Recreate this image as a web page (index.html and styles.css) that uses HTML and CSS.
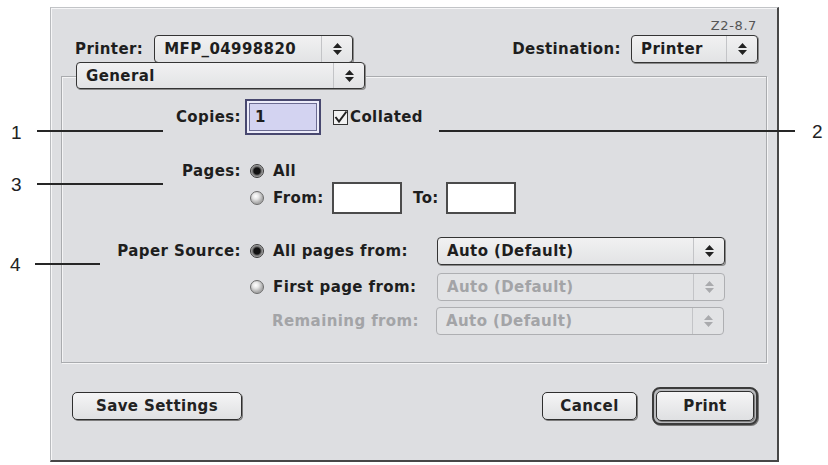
FILE: index.html
```html
<!DOCTYPE html>
<html>

<head>
  <meta charset="utf-8">
  <meta name="viewport" content="width=device-width">
  <title>Print dialog</title>
  <link rel="stylesheet" href="styles.css">
</head>

<body>
  <div class="dialog">
    <div class="version">Z2-8.7</div>

    <div class="top-row">
      <div class="field">
        <span class="lbl">Printer:</span>
        <div class="popup printer-pop">
          <span class="value">MFP_04998820</span>
          <span class="arrows"><svg width="9" height="12" viewBox="0 0 9 12"><path d="M4.5 0L9 5H0Z M0 7H9L4.5 12Z"/></svg></span>
        </div>
      </div>
      <div class="field">
        <span class="lbl">Destination:</span>
        <div class="popup dest-pop">
          <span class="value">Printer</span>
          <span class="arrows"><svg width="9" height="12" viewBox="0 0 9 12"><path d="M4.5 0L9 5H0Z M0 7H9L4.5 12Z"/></svg></span>
        </div>
      </div>
    </div>

    <div class="group">
      <div class="popup panel-pop">
        <span class="value">General</span>
        <span class="arrows"><svg width="9" height="12" viewBox="0 0 9 12"><path d="M4.5 0L9 5H0Z M0 7H9L4.5 12Z"/></svg></span>
      </div>

      <div class="row copies-row">
        <span class="row-label">Copies:</span>
        <div class="edit focused">1</div>
        <span class="check">
          <svg width="15" height="15" viewBox="0 0 15 15"><rect x="0.5" y="0.5" width="14" height="14" fill="#f2f2f2" stroke="#333"/><path d="M2.5 7L6 11.5L13.5 1.5" fill="none" stroke="#222" stroke-width="2"/></svg>
          Collated
        </span>
      </div>

      <div class="row pages-row">
        <span class="row-label">Pages:</span>
        <span class="radio on"></span>
        <span class="opt">All</span>
      </div>
      <div class="row from-row">
        <span class="row-label"></span>
        <span class="radio"></span>
        <span class="opt">From:</span>
        <div class="edit from-box"></div>
        <span class="to-lbl">To:</span>
        <div class="edit to-box"></div>
      </div>

      <div class="row paper-row first">
        <span class="row-label">Paper Source:</span>
        <span class="radio on"></span>
        <span class="opt wide">All pages from:</span>
        <div class="popup source-pop">
          <span class="value">Auto (Default)</span>
          <span class="arrows"><svg width="9" height="12" viewBox="0 0 9 12"><path d="M4.5 0L9 5H0Z M0 7H9L4.5 12Z"/></svg></span>
        </div>
      </div>
      <div class="row paper-row second">
        <span class="row-label"></span>
        <span class="radio"></span>
        <span class="opt wide">First page from:</span>
        <div class="popup source-pop disabled">
          <span class="value">Auto (Default)</span>
          <span class="arrows"><svg width="9" height="12" viewBox="0 0 9 12"><path d="M4.5 0L9 5H0Z M0 7H9L4.5 12Z"/></svg></span>
        </div>
      </div>
      <div class="row paper-row third">
        <span class="row-label"></span>
        <span class="opt sub">Remaining from:</span>
        <div class="popup source-pop disabled">
          <span class="value">Auto (Default)</span>
          <span class="arrows"><svg width="9" height="12" viewBox="0 0 9 12"><path d="M4.5 0L9 5H0Z M0 7H9L4.5 12Z"/></svg></span>
        </div>
      </div>
    </div>

    <div class="buttons">
      <button class="btn save">Save Settings</button>
      <div class="right-btns">
        <button class="btn cancel">Cancel</button>
        <div class="default-ring"><button class="btn print">Print</button></div>
      </div>
    </div>
  </div>

  <!-- numbered callouts -->
  <div class="callouts">
    <span class="num n1">1</span><span class="lead l1"></span>
    <span class="num n2">2</span><span class="lead l2"></span>
    <span class="num n3">3</span><span class="lead l3"></span>
    <span class="num n4">4</span><span class="lead l4"></span>
  </div>
</body>
</html>
```

FILE: styles.css
```css
body {
  margin: 0;
  background: #fff;
  font-family: "DejaVu Sans", Verdana, sans-serif;
  color: #1e1e1e;
  position: relative;
  width: 828px;
  height: 465px;
  overflow: hidden;
}

.dialog {
  display: flex;
  flex-direction: column;
  box-sizing: border-box;
  width: 729px;
  height: 455px;
  margin: 7px 0 0 50px;
  background: #dddee1;
  border-left: 1px solid #b9bbbe;
  border-top: 1px solid #c2c4c7;
  border-right: 2px solid #474747;
  border-bottom: 2px solid #474747;
  box-shadow: inset 1px 1px 0 #f6f6f7;
}

.version {
  align-self: flex-end;
  margin: 11px 20px 0 0;
  height: 14px;
  line-height: 14px;
  font-size: 13px;
  color: #555;
  letter-spacing: 0.6px;
}

.top-row {
  display: flex;
  justify-content: space-between;
  align-items: center;
  height: 28px;
  margin: 2px 19px 0 24px;
}

.field {
  display: flex;
  align-items: center;
}

.lbl,
.row-label,
.opt,
.to-lbl,
.check,
.popup .value,
.btn {
  font-weight: bold;
  font-size: 15px;
  letter-spacing: 0.4px;
  line-height: 18px;
}

.printer-pop {
  width: 199px;
  margin-left: 11px;
}

.dest-pop {
  width: 127px;
  margin-left: 10px;
}

/* pop-up menus */
.popup {
  display: flex;
  box-sizing: border-box;
  height: 28px;
  border: 1px solid #343434;
  border-radius: 4px;
  background: linear-gradient(#f1f1f2, #e2e3e5);
  box-shadow: 1px 1px 0 #8a8a8a;
}

.popup .value {
  flex: 1;
  display: flex;
  align-items: center;
  padding-left: 9px;
  white-space: nowrap;
}

.popup .arrows {
  width: 30px;
  display: flex;
  align-items: center;
  justify-content: center;
  border-left: 1px solid #c3c4c7;
}

.popup .arrows svg {
  fill: #222;
}

.popup.disabled {
  border-color: #aeafb2;
  box-shadow: none;
  background: #e2e3e5;
}

.popup.disabled .value {
  color: #a3a4a7;
}

.popup.disabled .arrows svg {
  fill: #a9aaad;
}

/* group box */
.group {
  box-sizing: border-box;
  height: 287px;
  margin: 13px 10px 0 10px;
  border: 1px solid #a9abae;
  box-shadow: inset 1px 1px 0 #f4f4f5, 1px 1px 0 #f4f4f5;
}

.panel-pop {
  width: 289px;
  height: 27px;
  margin: -15px 0 0 14px;
}

.row {
  display: flex;
  align-items: center;
}

.row-label {
  width: 179px;
  flex: none;
  text-align: right;
}

.copies-row {
  height: 36px;
  margin-top: 10px;
}

.edit {
  box-sizing: border-box;
  background: #fff;
  border: 1px solid #333;
  box-shadow: inset 1px 1px 0 #8c8c8c;
}

.edit.focused {
  width: 76px;
  height: 36px;
  margin-left: 4px;
  padding-left: 8px;
  display: flex;
  align-items: center;
  border: 2px solid #48486f;
  background: #d3d3f1;
  box-shadow: inset 0 0 0 2px #ececfa, inset 0 0 0 3px #6c6c92;
  font-weight: bold;
  font-size: 15px;
}

.check {
  display: flex;
  align-items: center;
  gap: 2px;
  margin-left: 12px;
}

.radio {
  flex: none;
  box-sizing: border-box;
  width: 14px;
  height: 14px;
  margin-left: 9px;
  border-radius: 50%;
  border: 1px solid #6b6b6b;
  background: radial-gradient(circle at 40% 35%, #fff 0, #e6e6e6 3px, #a9a9a9 7px);
}

.radio.on {
  border-color: #3a3a3a;
  background: radial-gradient(circle, #111 0, #111 3px, #6f6f6f 4.5px, #c8c8c8 6.5px);
}

.opt {
  padding-left: 9px;
  white-space: nowrap;
}

.pages-row {
  height: 22px;
  margin-top: 25px;
}

.from-row {
  height: 32px;
}

.from-row .opt {
  width: 50px;
}

.from-box,
.to-box {
  width: 70px;
  height: 32px;
  border-width: 2px;
  border-color: #4b4b4b;
  box-shadow: none;
}

.from-box {
  margin-left: 9px;
}

.to-lbl {
  margin-left: 11px;
  margin-right: 7px;
}

.paper-row {
  height: 28px;
}

.paper-row.first {
  margin-top: 23px;
}

.paper-row.second {
  margin-top: 8px;
}

.paper-row.third {
  margin-top: 6px;
}

.opt.wide {
  box-sizing: border-box;
  width: 173px;
}

.opt.sub {
  box-sizing: border-box;
  width: 195px;
  padding-right: 17px;
  text-align: right;
  color: #a3a4a7;
}

.source-pop {
  width: 288px;
}

/* buttons */
.buttons {
  display: flex;
  justify-content: space-between;
  align-items: center;
  height: 38px;
  margin: 24px 19px 0 21px;
}

.right-btns {
  display: flex;
  align-items: center;
  gap: 15px;
}

.btn {
  box-sizing: border-box;
  height: 28px;
  padding: 0;
  font-family: "DejaVu Sans", Verdana, sans-serif;
  color: #222;
  border: 1px solid #2f2f2f;
  border-radius: 5px;
  background: linear-gradient(#f5f5f6, #dfe0e2);
  box-shadow: 1px 1px 0 #7c7c7c;
}

.btn.save {
  width: 170px;
}

.btn.cancel {
  width: 95px;
}

.default-ring {
  box-sizing: border-box;
  width: 106px;
  height: 38px;
  padding: 2px;
  border: 2px solid #3b3b3b;
  border-radius: 8px;
  background: #b9babd;
  box-shadow: 1px 1px 0 #777;
}

.btn.print {
  width: 98px;
  height: 30px;
}

/* numbered callouts drawn over the dialog */
.callouts {
  position: absolute;
  left: 0;
  top: 0;
  width: 828px;
  height: 465px;
  pointer-events: none;
}

.num {
  position: absolute;
  font-family: "Liberation Sans", Arial, sans-serif;
  font-size: 19px;
  line-height: 19px;
  color: #222;
}

.lead {
  position: absolute;
  height: 2px;
  background: #262626;
}

.n1 { left: 11px; top: 123px; }
.l1 { left: 37px; top: 130px; width: 126px; }
.n2 { left: 812px; top: 122px; }
.l2 { left: 439px; top: 130px; width: 356px; }
.n3 { left: 11px; top: 175px; }
.l3 { left: 37px; top: 183px; width: 126px; }
.n4 { left: 10px; top: 255px; }
.l4 { left: 35px; top: 263px; width: 65px; }
```
